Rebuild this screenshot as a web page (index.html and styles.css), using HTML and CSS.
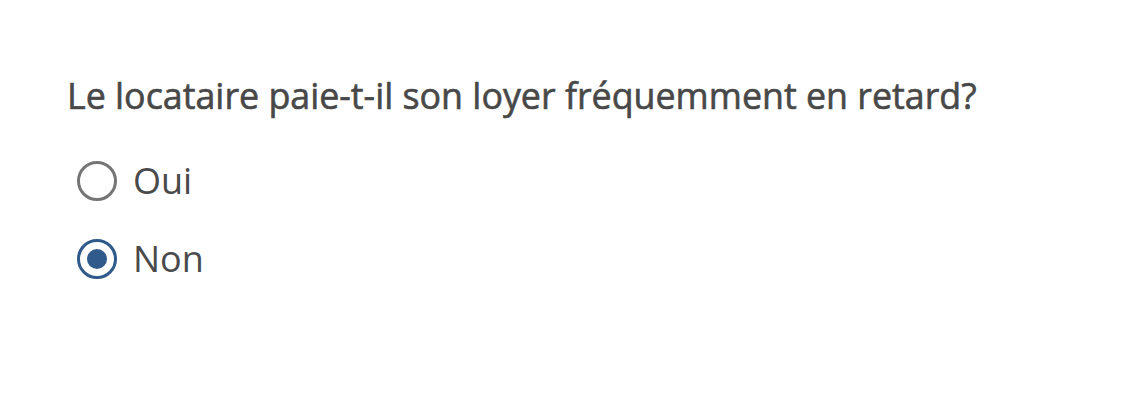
FILE: index.html
```html
<!DOCTYPE html>
<html lang="fr">
<head>
  <meta charset="UTF-8" />
  <meta name="viewport" content="width=device-width, initial-scale=1.0" />
  <title>Question</title>
  <link rel="stylesheet" href="styles.css">
</head>
<body>
  <div class="question" role="radiogroup" aria-labelledby="q-retard">
    <p class="question-title" id="q-retard">Le locataire paie-t-il son loyer fréquemment en retard?</p>

    <div class="options">
      <label class="option">
        <input type="radio" name="retard" value="oui">
        <span class="radio"></span>
        <span class="option-text">Oui</span>
      </label>

      <label class="option">
        <input type="radio" name="retard" value="non" checked>
        <span class="radio"></span>
        <span class="option-text">Non</span>
      </label>
    </div>
  </div>
</body>
</html>
```

FILE: styles.css
```css
body {
  margin: 0;
  background-color: #ffffff;
  font-family: "Open Sans", "Noto Sans", Arial, sans-serif;
  color: #4a4a4a;
}

.question {
  padding: 71px 0 0 67px;
}

/* no 500 weight installed, thicken the regular a little */
.question-title {
  margin: 0 0 36px;
  font-size: 35.8px;
  font-weight: 400;
  line-height: 49px;
  color: #484848;
  -webkit-text-stroke: 0.6px #484848;
}

.options {
  display: flex;
  flex-direction: column;
  gap: 29px;
}

.option {
  display: flex;
  align-items: center;
  gap: 16px;
  padding-left: 10px;
  height: 49px;
  cursor: pointer;
}

.option input {
  display: none;
}

.radio {
  width: 40px;
  height: 40px;
  box-sizing: border-box;
  border: 3px solid #757575;
  border-radius: 50%;
  display: flex;
  align-items: center;
  justify-content: center;
}

.option input:checked + .radio {
  border-color: #2f5a8a;
}

.option input:checked + .radio::after {
  content: "";
  width: 20px;
  height: 20px;
  border-radius: 50%;
  background-color: #2f5a8a;
}

.option-text {
  font-size: 36px;
  line-height: 49px;
  color: #4a4a4a;
}
```
